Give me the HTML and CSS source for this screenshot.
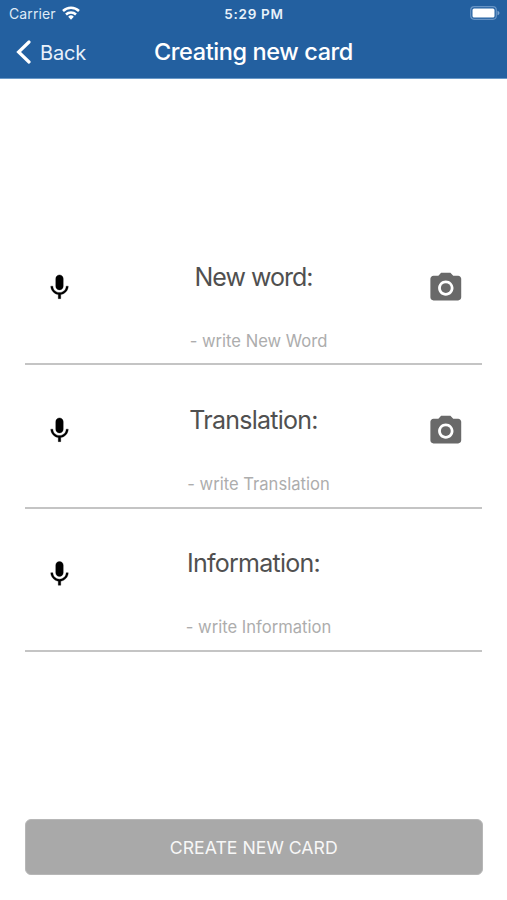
FILE: index.html
```html
<!DOCTYPE html>
<html lang="en">
<head>
<meta charset="utf-8">
<title>Creating new card</title>
<link rel="stylesheet" href="styles.css">
</head>
<body>
<svg class="sprite" aria-hidden="true">
  <symbol id="mic" viewBox="0 0 24 24"><path d="M12 14c1.66 0 2.99-1.34 2.99-3L15 5c0-1.66-1.34-3-3-3S9 3.340 9 5v6c0 1.660 1.340 3 3 3zm5.300-3c0 3-2.540 5.100-5.300 5.100S6.700 14 6.700 11H5c0 3.410 2.720 6.230 6 6.720V21h2v-3.280c3.280-.48 6-3.300 6-6.720h-1.700z" stroke="#000" stroke-width=".25"/></symbol>
  <symbol id="camera" viewBox="0 0 24 24"><path fill-rule="evenodd" d="M9 2L7.170 4H4c-1.100 0-2 .9-2 2v12c0 1.100.9 2 2 2h16c1.100 0 2-.9 2-2V6c0-1.100-.9-2-2-2h-3.170L15 2H9zm3 15c-2.760 0-5-2.240-5-5s2.240-5 5-5 5 2.240 5 5-2.240 5-5 5z"/><circle cx="12" cy="12" r="3.200"/></symbol>
</svg>
<header class="top">
  <div class="status">
    <div class="carrier"><span class="carrier-name">Carrier</span>
      <svg class="wifi" viewBox="0 0 18 14"><g fill="none" stroke="#fff" stroke-width="2.500"><path d="M1 5a11.500 11.500 0 0 1 16 0"/><path d="M4 8.500a7.200 7.200 0 0 1 10 0"/></g><path fill="#fff" d="M6.200 10.700a4 4 0 0 1 5.600 0L9 13.700z"/></svg>
    </div>
    <span class="time">5:29 PM</span>
    <svg class="battery" viewBox="0 0 30 14"><rect x=".7" y=".7" width="25.600" height="12.600" rx="3.500" fill="none" stroke="#6794c5" stroke-width="1.200"/><rect x="2.500" y="2.500" width="22" height="9" rx="1.500" fill="#fff"/><path fill="#7fa5cf" d="M27.500 4.700c2.600.8 2.600 3.800 0 4.600z"/></svg>
  </div>
  <nav class="nav">
    <div class="back"><svg class="chevron" viewBox="0 0 15 24"><path d="M13 2L2.600 12 13 22" fill="none" stroke="#fff" stroke-width="3.200" stroke-linecap="round"/></svg><span class="back-text">Back</span></div>
    <h1 class="title">Creating new card</h1>
  </nav>
</header>
<main class="form">
  <section class="field">
    <svg class="mic" viewBox="0 0 30 30"><use href="#mic" x=".5" y=".4" width="30" height="30"/></svg>
    <div class="texts"><h2 class="label label-word">New word:</h2><p class="hint">- write New Word</p></div>
    <svg class="camera" viewBox="0 0 37 37"><use href="#camera" x=".3" y=".6" width="37" height="37"/></svg>
  </section>
  <section class="field">
    <svg class="mic" viewBox="0 0 30 30"><use href="#mic" x=".5" y=".4" width="30" height="30"/></svg>
    <div class="texts"><h2 class="label">Translation:</h2><p class="hint">- write Translation</p></div>
    <svg class="camera" viewBox="0 0 37 37"><use href="#camera" x=".3" y=".6" width="37" height="37"/></svg>
  </section>
  <section class="field">
    <svg class="mic" viewBox="0 0 30 30"><use href="#mic" x=".5" width="30" height="30"/></svg>
    <div class="texts"><h2 class="label">Information:</h2><p class="hint">- write Information</p></div>
  </section>
</main>
<button class="create" type="button"><span class="create-text">CREATE NEW CARD</span></button>
</body>
</html>
```
FILE: styles.css
```css
* { box-sizing: border-box; }
body { margin: 0; height: 900px; overflow: hidden; display: flex; flex-direction: column; background: #fff; font-family: Inter, "Liberation Sans", sans-serif; }
h1, h2, p { margin: 0; font-weight: 400; white-space: nowrap; }
svg { display: block; }
.sprite { display: none; }
.top { height: 79px; background: #2360a0; border-bottom: 1px solid #6999c8; color: #fff; }
.status { height: 26px; display: grid; grid-template-columns: 1fr auto 1fr; align-items: center; padding: 0 7px 0 9px; }
.carrier { display: flex; align-items: center; gap: 6px; font-size: 14px; letter-spacing: .12px; color: #dfeaf6; }
.wifi { width: 18px; height: 14px; }
.time { padding-top: 2px; font-size: 13.500px; font-weight: 600; letter-spacing: .7px; margin-right: 1px; color: #e8f1fa; }
.battery { width: 30px; height: 14px; justify-self: end; }
.nav { height: 52px; display: grid; grid-template-columns: 1fr auto 1fr; align-items: center; padding-left: 16px; padding-right: 16px; }
.back { display: flex; align-items: center; gap: 9px; font-size: 20px; letter-spacing: -.2px; color: #e8f1fa; }
.back-text { padding-top: 1px; }
.chevron { width: 15px; height: 24px; }
.title { font-size: 23.500px; font-weight: 500; letter-spacing: -.4px; line-height: 30px; margin-top: -1px; }
.form { padding: 143px 25px 0; }
.field { height: 143.250px; border-bottom: 2px solid #c4c4c4; display: grid; grid-template-columns: 80px 1fr 80px; align-items: start; }
.mic { width: 30px; height: 30px; margin: 50px 0 0 19px; fill: #000; }
.camera { width: 37px; height: 37px; margin: 47.200px 0 0 25px; fill: #696969; overflow: visible; }
.texts { display: flex; flex-direction: column; align-items: center; }
.label { margin-top: 38.900px; font-size: 25px; letter-spacing: -.75px; line-height: 32px; color: #505050; }
.label-word { letter-spacing: -1px; }
.hint { margin: 36.700px 0 0 10px; font-size: 16.600px; line-height: 22px; color: #adadad; }
.create { margin: auto 24.500px 24.700px 25px; height: 56px; border: 1px solid #b7b7b7; border-radius: 6px; background: #a9a9a9; color: #f7f7f7; padding: 0; font: 400 17.700px Inter, "Liberation Sans", sans-serif; }
```
